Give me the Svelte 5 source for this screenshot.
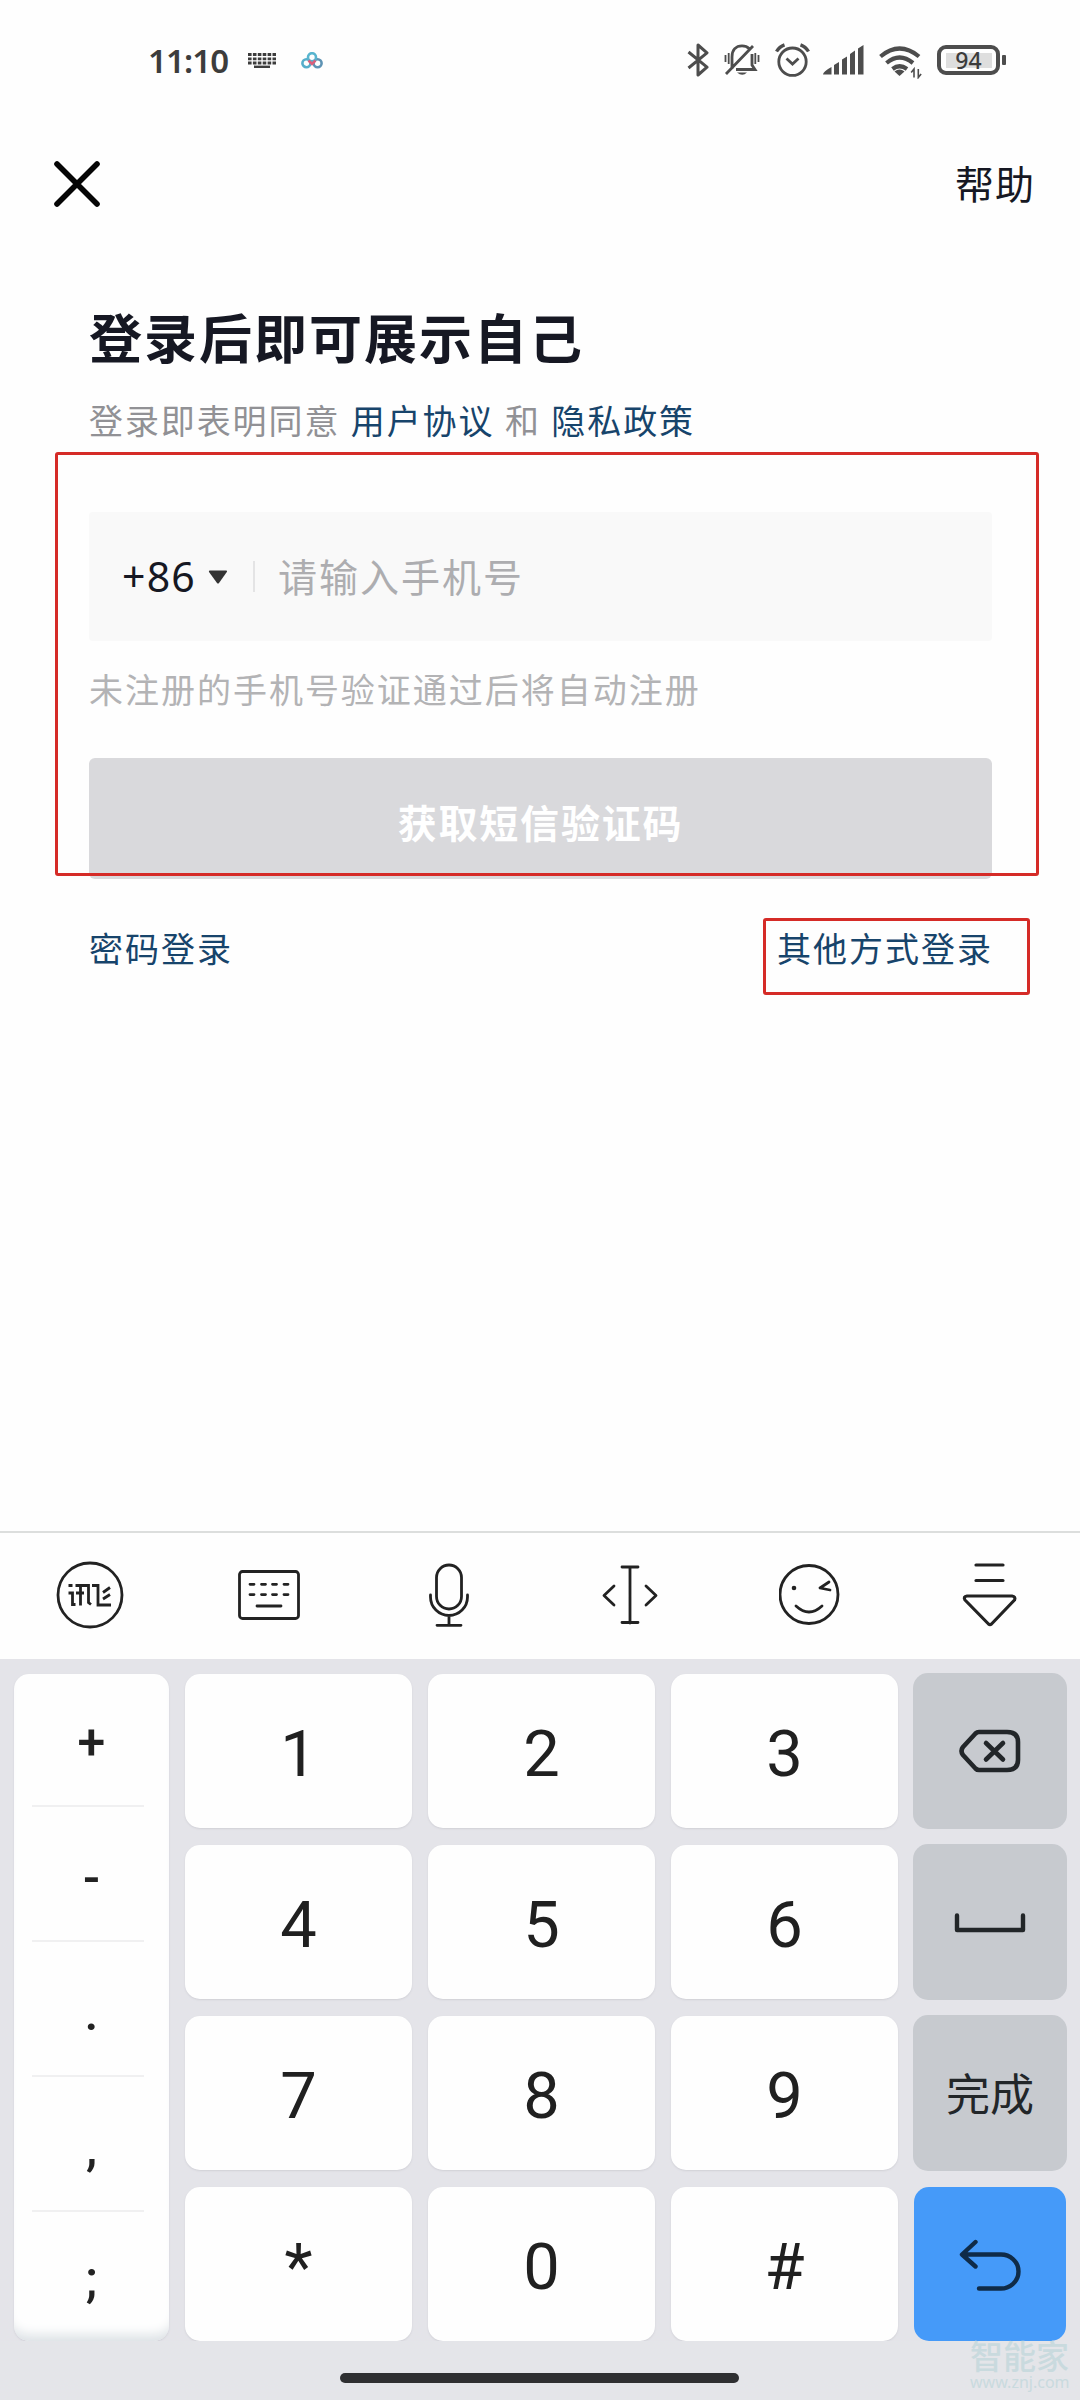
<script>
  const symbols = ['+', '-', '.', ',', ';'];
  const digits = ['1', '2', '3', '4', '5', '6', '7', '8', '9', '*', '0', '#'];
</script>

<div class="screen">
  <div class="status">
    <span class="time">11:10</span>
    <svg class="kbd" width="28" height="15" viewBox="0 0 28 15">
      <path d="M0 1.5h28M0 5.8h28M0 10h28" stroke="#3c3c3c" stroke-width="2.8" stroke-dasharray="3.6 1.3" />
      <path d="M6 13.8h16" stroke="#3c3c3c" stroke-width="2.4" />
    </svg>
    <svg class="cloud" width="22" height="17" viewBox="0 0 22 17" fill="none" stroke-width="2.6">
      <circle cx="5.4" cy="11.2" r="4" stroke="#56aecb" />
      <circle cx="16.6" cy="11.2" r="4" stroke="#5e93b4" />
      <circle cx="11" cy="5.2" r="4" stroke="#58b5cf" />
      <path d="M7.5 8.5 11 12l3.5-3.5" stroke="#d9607c" />
    </svg>
    <div class="indicators">
      <svg width="22" height="34" viewBox="0 0 22 34" fill="none" stroke="#4d4d4d" stroke-width="3" stroke-linejoin="round">
        <path d="M1.5 9 20 24.2 11 32V2l9 7.8L1.5 25" />
      </svg>
      <svg class="bell" width="36" height="34" viewBox="0 0 36 34" fill="none" stroke="#4d4d4d" stroke-width="2.8">
        <path d="M8 26V14C8 7 12 2.8 18 2.8c3 0 5.500 1 7 2.700M28 11v11l3 4.500H12M2 31 29 3" />
        <path d="M13 29.500h10q-4.500 4.500-10 0Z" fill="#4d4d4d" stroke="none" />
        <path d="M1.500 12v7M4.700 10v11M31.300 10v11M34.500 12v7" stroke-width="1.800" />
      </svg>
      <svg class="alarm" width="35" height="34" viewBox="0 0 35 34" fill="none" stroke="#4d4d4d" stroke-width="2.8">
        <circle cx="17.500" cy="18.700" r="13.700" />
        <path d="m11.500 15.500 6 5.500 6-5.500" />
        <path d="M1.500 8.500Q4.500 3.500 9.500 1.800M33.500 8.500Q30.500 3.500 25.500 1.800" stroke-width="3.400" />
      </svg>
      <svg class="signal" width="41" height="30" viewBox="0 0 41 30" fill="#4d4d4d">
        <path d="M0 29.500q0-3 8.500-7.500v7.500ZM11 20l5-3v12.500h-5ZM19 14.500l5-3v18h-5ZM27 9l5-3.500v24h-5ZM35 3.500 40.500 0v29.500H35Z" />
      </svg>
      <svg class="wifi" width="43" height="34" viewBox="0 0 43 34" fill="none" stroke="#4d4d4d" stroke-width="4.200">
        <path d="M1.500 11.500Q20.500-4.500 40 11.500M7.500 18Q20.500 7 34 18M13.500 24Q20.500 18.500 28 24" />
        <path d="m15.500 26.500q5-4 10 0L20.500 31Z" fill="#4d4d4d" stroke="none" />
        <path d="M35 32.500V24l-2.800 3.500M39.300 24v8.500l2.800-3.500" stroke-width="1.600" />
      </svg>
      <div class="battery"><span>94</span></div>
      <i class="nub"></i>
    </div>
  </div>

  <header>
    <svg width="46" height="46" viewBox="0 0 46 46" fill="none" stroke="#050505" stroke-width="5.600" stroke-linecap="round">
      <path d="m3 3 40 40M43 3 3 43" />
    </svg>
    <span class="help">帮助</span>
  </header>

  <main>
    <h1>登录后即可展示自己</h1>
    <p class="terms"><span>登录即表明同意</span><a>用户协议</a><span>和</span><a>隐私政策</a></p>
    <div class="field">
      <span class="code">+86</span>
      <svg width="20" height="14" viewBox="0 0 20 14"><path d="M1.500.5h17q1 .5.300 1.500L11 13q-1 1-2 0L1 2Q.5 1 1.500.5Z" fill="#333" /></svg>
      <i class="divider"></i>
      <span class="placeholder">请输入手机号</span>
    </div>
    <p class="hint">未注册的手机号验证通过后将自动注册</p>
    <div class="submit">获取短信验证码</div>
    <div class="links"><a>密码登录</a><a>其他方式登录</a></div>
  </main>
  <div class="mark mark-form"></div>
  <div class="mark mark-other"></div>

  <div class="toolbar">
    <div>
      <svg width="68" height="68" viewBox="0 0 68 68" fill="none" stroke="#222" stroke-width="2.800">
        <circle cx="34" cy="34" r="32" />
        <path d="M12.500 24.500h4M12.500 32h4v11.500h3M19.500 24.500h13v17l2.500 2M24.500 24.500v20M20 32h8M36 24.500h6v19.500h13M47 31.500l7-5M47 38l7-4.500" />
      </svg>
    </div>
    <div class="nudge">
      <svg width="62" height="50" viewBox="0 0 62 50" fill="none" stroke="#222" stroke-width="2.800" stroke-linecap="round">
        <rect x="1.500" y="1.500" width="59" height="47" rx="3" />
        <path d="M12 14.300h4M23.500 14.300h4M34.500 14.300h4M46 14.300h4M12 24.600h4M23.500 24.600h4M34.500 24.600h4M46 24.600h4M19 36h24" />
      </svg>
    </div>
    <div class="nudge">
      <svg width="40" height="64" viewBox="0 0 40 64" fill="none" stroke="#222" stroke-width="2.800" stroke-linecap="round">
        <rect x="7.500" y="2" width="25" height="44" rx="12.500" />
        <path d="M1.500 32v2a18.500 18.500 0 0 0 37 0v-2M20 53v9M8 62.300h24" />
      </svg>
    </div>
    <div>
      <svg width="56" height="60" viewBox="0 0 56 60" fill="none" stroke="#222" stroke-width="2.800" stroke-linecap="round" stroke-linejoin="round">
        <path d="M20 2h16M28 2v56M20 57.500h16M12 21 2 30.500l10 9.500M44 21l10 9.500L44 40" />
      </svg>
    </div>
    <div>
      <svg width="62" height="62" viewBox="0 0 62 62" fill="none" stroke="#222" stroke-width="2.800" stroke-linecap="round" stroke-linejoin="round">
        <circle cx="30" cy="30.500" r="29" />
        <circle cx="15" cy="24" r="2.300" fill="#222" stroke="none" />
        <path d="m50 18-9 6 10 2M17 42q13 12 26 0" />
      </svg>
    </div>
    <div>
      <svg width="56" height="66" viewBox="0 0 56 66" fill="none" stroke="#222" stroke-width="3.200" stroke-linecap="round" stroke-linejoin="round">
        <path d="M14 3h27M14 18.500h27M5 34h45q4 .5 2.500 4L29.500 62q-1.500 1.200-3 0L3 38Q1 34.500 5 34Z" />
      </svg>
    </div>
  </div>

  <div class="keyboard">
    <div class="symbols">
      {#each symbols as s}
        <div><span>{s}</span></div>
      {/each}
    </div>
    <div class="digits">
      {#each digits as d}
        <div>{d}</div>
      {/each}
    </div>
    <div class="actions">
      <div>
        <svg width="62" height="46" viewBox="0 0 62 46" fill="none" stroke="#222629" stroke-width="4.600" stroke-linecap="round" stroke-linejoin="round">
          <path d="M20 3h28q11 0 11 10v18q0 10-11 10H20q-2 0-3.500-1.500L4 26q-3-4 0-8L16.500 4.500Q18 3 20 3Z" />
          <path d="m27 14 17 16.500M44 14 27 30.500" />
        </svg>
      </div>
      <div>
        <svg class="space" width="72" height="20" viewBox="0 0 72 20" fill="none" stroke="#222629" stroke-width="4.400" stroke-linecap="round" stroke-linejoin="round">
          <path d="M3 2.500v14.500h66V2.500" />
        </svg>
      </div>
      <div class="done">完成</div>
      <div class="enter">
        <svg width="62" height="52" viewBox="0 0 62 52" fill="none" stroke="#0f2b48" stroke-width="4.400" stroke-linecap="round" stroke-linejoin="round">
          <path d="M16.500 3 3 15.500l13.500 12M4 15.500h38c9 0 17.500 7 17.500 17S51 49.500 42 49.500H20" />
        </svg>
      </div>
    </div>
  </div>
  <div class="home"><i></i></div>
  <div class="watermark"><b>智能家</b><span>www.znj.com</span></div>
</div>

<style>
  :global(body) { background: #fefefe; }
  * { box-sizing: border-box; }
  .screen {
    position: relative;
    width: 1080px;
    height: 2400px;
    display: flex;
    flex-direction: column;
    background: #fefefe;
    overflow: hidden;
    font-family: "Noto Sans CJK SC", sans-serif;
    color: #161823;
  }
  svg { display: block; flex: none; }
  .status { height: 120px; padding: 0 74px 0 148px; display: flex; align-items: center; }
  .time { font: 600 33px/40px "Noto Sans", sans-serif; color: #3c3c3c; width: 100px; letter-spacing: -0.900px; margin-top: 1px; }
  .cloud { margin-left: 25px; }
  .indicators { margin-left: auto; display: flex; align-items: center; }
  .bell { margin-left: 15px; }
  .alarm { margin-left: 15px; }
  .signal { margin-left: 13px; }
  .wifi { margin: 3px 0 0 15px; }
  .battery {
    width: 63px; height: 30px; margin-left: 15px;
    border: 4px solid #4d4d4d; border-radius: 9px;
    display: flex; align-items: center; justify-content: center;
  }
  .battery span {
    width: 46px; height: 15px; background: #dedede; text-align: center;
    font: 500 23px/15px "Noto Sans", sans-serif; color: #3c3c3c;
  }
  .nub { width: 4px; height: 10px; margin-left: 2px; background: #4d4d4d; border-radius: 1px; }

  header { height: 128px; padding: 0 45px 0 54px; display: flex; align-items: center; justify-content: space-between; }
  .help { font-size: 39px; line-height: 50px; letter-spacing: 1px; margin-top: -4px; }

  main { height: 1283px; padding: 0 88px 0 89px; }
  h1 { margin: 52px 0 0; font-size: 53px; line-height: 72px; letter-spacing: 2px; font-weight: 700; color: #161823; white-space: nowrap; }
  p { margin: 0; white-space: nowrap; font-size: 34px; line-height: 50px; letter-spacing: 1.900px; }
  .terms { margin-top: 23px; display: flex; gap: 10.500px; color: #919195; }
  a { color: #17446b; }
  .field {
    margin-top: 67px; height: 129px; padding-left: 33px; border-radius: 4px;
    background: #f9f9f9; display: flex; align-items: center;
  }
  .code { width: 86px; font: 400 41px/50px "Noto Sans", sans-serif; letter-spacing: 1.200px; margin-top: -2px; }
  .divider { width: 2px; height: 31px; margin: 0 23px 0 25px; background: #e4e4e5; }
  .placeholder { font-size: 39px; line-height: 50px; letter-spacing: 2px; color: #adadb0; margin-top: -4px; }
  .hint { margin-top: 23px; letter-spacing: 1.980px; color: #b3b3b5; }
  .submit {
    margin-top: 44px; height: 121px; border-radius: 6px; background: #d9d9dc;
    text-align: center; font-size: 39px; line-height: 126px; letter-spacing: 1.800px; font-weight: 700; color: #fff;
  }
  .links { margin-top: 44px; display: flex; justify-content: space-between; font-size: 34px; line-height: 50px; letter-spacing: 1.980px; margin-right: -1px; }
  /* annotation frames lie over the form */
  .mark { position: absolute; border: 3px solid #d52b27; border-radius: 3px; }
  .mark-form { left: 55px; top: 452px; width: 984px; height: 424px; }
  .mark-other { left: 763px; top: 918px; width: 267px; height: 77px; }

  .toolbar { height: 128px; border-top: 2px solid #dcdedd; display: grid; grid-template-columns: repeat(6, 1fr); }
  .toolbar div { display: flex; align-items: center; justify-content: center; padding-bottom: 2px; }
  .toolbar .nudge { padding-right: 2px; }

  .keyboard { height: 682px; padding: 15px 13px 0 14px; display: flex; background: #e4e4e9; }
  .symbols {
    width: 155px; height: 667px; border-radius: 15px; padding: 0 25px 0 18px; background: #fefefe;
    box-shadow: 0 1px 2px #cfcfd6, inset 0 -14px 12px -8px #dce1e5;
    font: 500 50px/60px Roboto, sans-serif; color: #222;
  }
  .symbols div { height: 135px; border-bottom: 2px solid #f0f0f1; display: flex; align-items: center; justify-content: center; padding: 9px 0 0 7px; }
  .symbols div:first-child { height: 133px; padding-top: 5px; }
  .symbols div:last-child { height: 129px; border: 0; padding-top: 5px; }
  .digits { margin-left: 16px; width: 713px; display: grid; grid-template-columns: repeat(3, 227px); grid-auto-rows: 154px; gap: 17px 16px; align-content: start; }
  .digits div {
    background: #fefefe; border-radius: 15px; box-shadow: 0 1px 2px #d0d0d6;
    font: 400 65px/161px Roboto, sans-serif; text-align: center; color: #202020;
  }
  .actions { margin: -1px 0 0 15px; width: 154px; display: grid; grid-auto-rows: 156px; gap: 15px; align-content: start; }
  .actions div { background: #c7cacf; border-radius: 15px; display: flex; align-items: center; justify-content: center; color: #222629; }
  .actions svg { margin-top: 1px; }
  .actions .done { font-size: 44px; padding-bottom: 2px; }
  .actions .enter { background: #459af9; margin: 1px; }
  .home { flex: 1; background: #e4e5e9; display: flex; justify-content: center; padding: 32px 1px 0 0; }
  .home i { width: 399px; height: 10px; border-radius: 5px; background: #2e2f31; }
  .watermark { position: absolute; left: 970px; top: 2338px; width: 102px; display: flex; flex-direction: column; color: #c9dade; white-space: nowrap; }
  .watermark b { font-size: 33px; line-height: 34px; font-weight: 500; }
  .watermark span { font: 400 16px/20px "Noto Sans", sans-serif; }
</style>
